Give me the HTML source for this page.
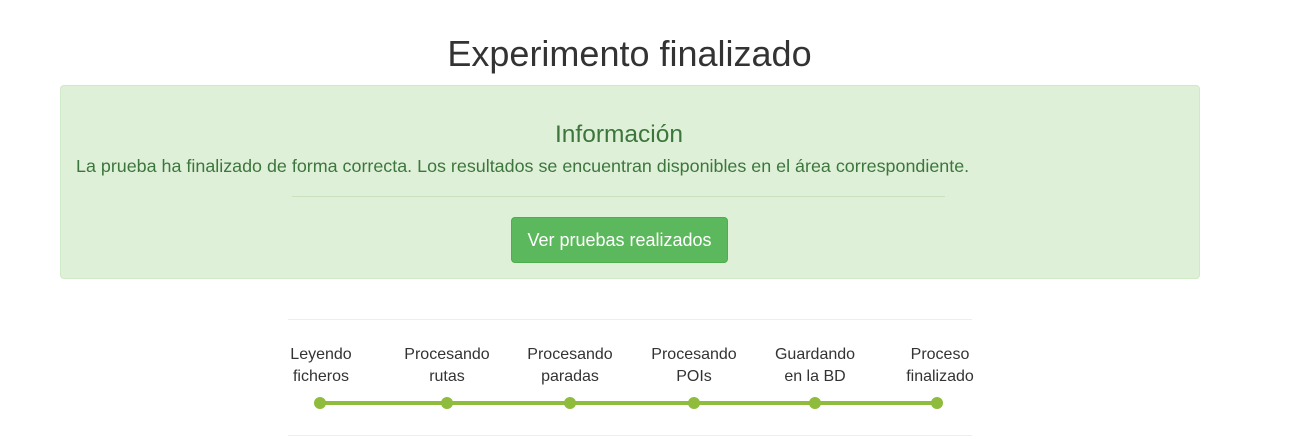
<!DOCTYPE html>
<html><head><meta charset="utf-8"><style>
body{margin:0;width:1291px;height:439px;background:#fff;font-family:"Liberation Sans",sans-serif;position:relative;overflow:hidden}
.a{position:absolute;white-space:nowrap}
</style></head><body>
<div class="a" style="left:0;width:1259px;top:30px;text-align:center;font-size:36px;color:#333;line-height:48px">Experimento finalizado</div>
<div class="a" style="left:60px;top:85px;width:1138px;height:192px;background:#dff0d8;border:1px solid #d0e9c6;border-radius:4px"></div>
<div class="a" style="left:0;width:1238px;top:119px;text-align:center;font-size:24.5px;color:#3c763d;line-height:32px">Información</div>
<div class="a" style="left:76px;top:155px;font-size:17.9px;color:#3c763d;line-height:22px">La prueba ha finalizado de forma correcta. Los resultados se encuentran disponibles en el área correspondiente.</div>
<div class="a" style="left:292px;top:196px;width:653px;height:1px;background:#c9e2bd"></div>
<div class="a" style="left:511px;top:217px;width:215px;height:44px;background:#5cb85c;border:1px solid #4cae4c;border-radius:4px;color:#fff;font-size:18px;line-height:44px;text-align:center">Ver pruebas realizados</div>
<div class="a" style="left:288px;top:319px;width:684px;height:1px;background:#eee"></div>
<div class="a" style="left:288px;top:435px;width:684px;height:1px;background:#eee"></div>
<div class="a" style="left:320px;top:401px;width:617px;height:4px;background:#8fbc3c"></div>
<svg class="a" style="left:0;top:0" width="1291" height="439"><g fill="#8fbc3c">
<circle cx="320" cy="403" r="6"/><circle cx="447" cy="403" r="6"/><circle cx="570" cy="403" r="6"/><circle cx="694" cy="403" r="6"/><circle cx="815" cy="403" r="6"/><circle cx="937" cy="403" r="6"/></g></svg>
<div style="font-size:16px;color:#333;line-height:22px">
<div class="a" style="left:270px;width:102px;top:344px;text-align:center">Leyendo<br>ficheros</div>
<div class="a" style="left:397px;width:100px;top:344px;text-align:center">Procesando<br>rutas</div>
<div class="a" style="left:520px;width:100px;top:344px;text-align:center">Procesando<br>paradas</div>
<div class="a" style="left:644px;width:100px;top:344px;text-align:center">Procesando<br>POIs</div>
<div class="a" style="left:765px;width:100px;top:344px;text-align:center">Guardando<br>en la BD</div>
<div class="a" style="left:890px;width:100px;top:344px;text-align:center">Proceso<br>finalizado</div>
</div>
</body></html>
